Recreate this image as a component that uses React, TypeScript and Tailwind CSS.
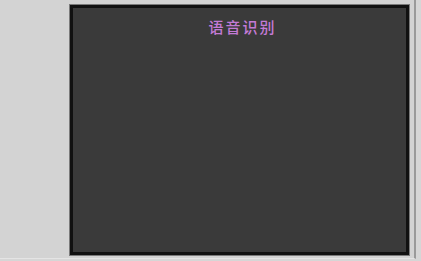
export default function App() {
  return (
    <div className="w-[421px] h-[261px] bg-[#d6d6d6] overflow-hidden">
      <div className="w-[416px] h-[259px] border-r-2 border-b border-r-[#9a9a9a] border-b-[#e4e4e4] bg-[#d3d3d3] pl-[69px] pt-[4px]">
        <div className="w-[341px] h-[252px] border border-[#7a7a7a]">
          <div className="w-full h-full border-[3px] border-[#111111] bg-[#3a3a3a] flex flex-col items-center pt-[9px] pl-[6px]">
            <h1
              className="text-[15px] leading-[20px] font-medium tracking-[2px] text-[#c47ad6]"
              style={{ fontFamily: '"Noto Sans CJK SC", sans-serif' }}
            >
              语音识别
            </h1>
          </div>
        </div>
      </div>
    </div>
  );
}
